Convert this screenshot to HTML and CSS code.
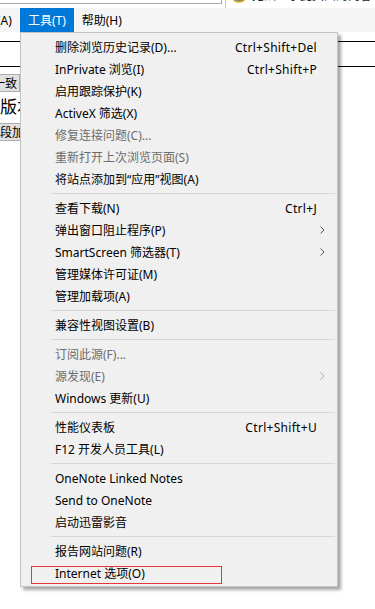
FILE: index.html
```html
<!DOCTYPE html>
<html lang="zh-CN">

<head>
    <meta charset="UTF-8">
    <meta name="viewport" content="width=device-width, initial-scale=1.0">
    <title>工具菜单</title>
    <link rel="stylesheet" href="styles.css">
</head>

<body>
    <!-- 顶部地址栏残边 -->
    <div class="top-strip">
        <div class="addr-box"></div>
        <div class="tab-sep"></div>
        <div class="tab">
            <svg class="tab-icon" width="14" height="14" viewBox="0 0 14 14">
                <circle cx="7" cy="7" r="6" fill="#2d8fe0" />
                <path d="M1 9.5 C3 14 11 14 13 9.5" stroke="#f2a313" stroke-width="1.6" fill="none" />
            </svg>
            <span class="tab-title">无法显示此页面的内容</span>
        </div>
    </div>

    <!-- 菜单栏 -->
    <div class="menubar">
        <span class="mb-item mb-first">收藏夹(A)</span>
        <span class="mb-item active">工具(T)</span>
        <span class="mb-item">帮助(H)</span>
    </div>

    <!-- 页面内容（被菜单遮挡） -->
    <div class="page">
        <div class="lined"></div>
        <button class="btn btn-a">一致</button>
        <div class="big-text">版本</div>
        <button class="btn btn-b">段加</button>
    </div>

    <!-- 工具下拉菜单 -->
    <div class="menu">
        <div class="item"><span class="label">删除浏览历史记录(D)...</span><span class="key">Ctrl+Shift+Del</span></div>
        <div class="item"><span class="label">InPrivate 浏览(I)</span><span class="key">Ctrl+Shift+P</span></div>
        <div class="item"><span class="label">启用跟踪保护(K)</span></div>
        <div class="item"><span class="label">ActiveX 筛选(X)</span></div>
        <div class="item disabled"><span class="label">修复连接问题(C)...</span></div>
        <div class="item disabled"><span class="label">重新打开上次浏览页面(S)</span></div>
        <div class="item"><span class="label">将站点添加到“应用”视图(A)</span></div>
        <div class="sep"></div>
        <div class="item"><span class="label">查看下载(N)</span><span class="key">Ctrl+J</span></div>
        <div class="item"><span class="label">弹出窗口阻止程序(P)</span><svg class="arrow" width="5" height="8" viewBox="0 0 5 8"><path d="M0.5 0.5 L4 4 L0.5 7.5" fill="none" stroke="currentColor" stroke-width="1" /></svg></div>
        <div class="item"><span class="label">SmartScreen 筛选器(T)</span><svg class="arrow" width="5" height="8" viewBox="0 0 5 8"><path d="M0.5 0.5 L4 4 L0.5 7.5" fill="none" stroke="currentColor" stroke-width="1" /></svg></div>
        <div class="item"><span class="label">管理媒体许可证(M)</span></div>
        <div class="item"><span class="label">管理加载项(A)</span></div>
        <div class="sep"></div>
        <div class="item"><span class="label">兼容性视图设置(B)</span></div>
        <div class="sep"></div>
        <div class="item disabled"><span class="label">订阅此源(F)...</span></div>
        <div class="item disabled"><span class="label">源发现(E)</span><svg class="arrow" width="5" height="8" viewBox="0 0 5 8"><path d="M0.5 0.5 L4 4 L0.5 7.5" fill="none" stroke="currentColor" stroke-width="1" /></svg></div>
        <div class="item"><span class="label">Windows 更新(U)</span></div>
        <div class="sep"></div>
        <div class="item"><span class="label">性能仪表板</span><span class="key">Ctrl+Shift+U</span></div>
        <div class="item"><span class="label">F12 开发人员工具(L)</span></div>
        <div class="sep"></div>
        <div class="item"><span class="label">OneNote Linked Notes</span></div>
        <div class="item"><span class="label">Send to OneNote</span></div>
        <div class="item"><span class="label">启动迅雷影音</span></div>
        <div class="sep"></div>
        <div class="item"><span class="label">报告网站问题(R)</span></div>
        <div class="item"><span class="label">Internet 选项(O)</span></div>
    </div>

    <!-- 红色标注框 -->
    <div class="mark"></div>
</body>

</html>
```

FILE: styles.css
```css
* {
    margin: 0;
    padding: 0;
    box-sizing: border-box;
}

body {
    background: #fff;
    font-family: "Noto Sans", "Noto Sans CJK SC", sans-serif;
    font-size: 12px;
    color: #000;
    position: relative;
    height: 609px;
    overflow: hidden;
}

/* 顶部残边 */
.top-strip {
    height: 8px;
    display: flex;
    align-items: flex-start;
    overflow: hidden;
}

.addr-box {
    width: 222px;
    height: 4px;
    border-right: 1px solid #a8a8a8;
    border-bottom: 1px solid #a8a8a8;
}

.tab-sep {
    width: 1px;
    height: 8px;
    margin-left: 3px;
    background: #c8c8c8;
}

.tab {
    display: flex;
    align-items: flex-start;
    margin-left: 6px;
}

.tab-icon {
    margin-top: -11px;
}

.tab-title {
    margin-left: 6px;
    margin-top: -13px;
    line-height: 16px;
    font-family: "Noto Sans CJK SC", sans-serif;
    font-size: 12px;
    color: #222;
}

/* 菜单栏 */
.menubar {
    height: 24px;
    background: #f5f5f5;
    display: flex;
    align-items: stretch;
}

.mb-item {
    display: flex;
    align-items: center;
    padding: 0 8px;
    white-space: nowrap;
}

.mb-first {
    margin-left: -47px;
}

.mb-item.active {
    background: #0078d7;
    color: #fff;
}

/* 页面内容 */
.page {
    padding-top: 9px;
}

.lined {
    height: 26px;
    border-top: 1px solid #000;
    border-bottom: 1px solid #000;
}

.btn {
    display: block;
    height: 18px;
    margin-top: 7px;
    padding: 0 2px;
    border: 1px solid #adadad;
    background: #e1e1e1;
    font-family: "Noto Sans CJK SC", sans-serif;
    font-size: 12px;
    line-height: 16px;
    color: #000;
}

.btn-a {
    margin-left: -10px;
}

.big-text {
    margin-top: 3px;
    height: 24px;
    font-family: "Noto Sans CJK SC", sans-serif;
    font-size: 17px;
    line-height: 22px;
}

.btn-b {
    margin-top: 4px;
    margin-left: -3px;
}

/* 下拉菜单 */
.menu {
    position: absolute;
    left: 20px;
    top: 32px;
    width: 318px;
    padding: 3px 0 2px;
    background: #f0f0f0;
    border: 1px solid #c4c4c4;
    box-shadow: 3px 3px 3px rgba(0, 0, 0, 0.35);
}

.item {
    height: 22px;
    display: flex;
    align-items: center;
    padding: 0 20px 0 34px;
    white-space: nowrap;
}

.item .label {
    flex: 1;
}

.item .key {
    letter-spacing: 0.3px;
}

.item.disabled {
    color: #6d6d6d;
}

.arrow {
    margin-right: -8px;
    color: #555;
}

.item.disabled .arrow {
    color: #a8a8a8;
}

.sep {
    height: 1px;
    margin: 3px 2px 3px 30px;
    background: #d7d7d7;
}

/* 标注 */
.mark {
    position: absolute;
    left: 31px;
    top: 566px;
    width: 191px;
    height: 18px;
    border: 1px solid #e3353a;
}
```
